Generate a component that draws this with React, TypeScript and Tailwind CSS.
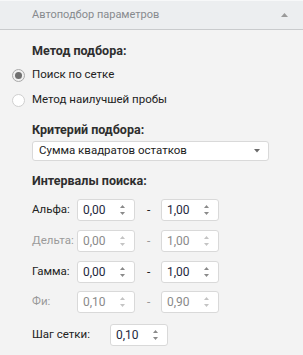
import React from "react";

const font = { fontFamily: 'Roboto, "Noto Sans", sans-serif' };

function Spin({ value, disabled }: { value: string; disabled?: boolean }) {
  return (
    <div className="flex h-[22px] w-[58px] items-center justify-between rounded-[3px] border border-[#d9d9d9] bg-white pl-[5px] pr-[8px]">
      <span className={`text-[12px] leading-none ${disabled ? "text-[#8a8a8a]" : "text-[#1e2840]"}`}>{value}</span>
      <svg width="7" height="12" viewBox="0 0 7 12">
        <path d="M3.5 1 L6 4 L1 4 Z" fill={disabled ? "#c4c4c4" : "#8a8a8a"} />
        <path d="M1 8 L6 8 L3.5 11 Z" fill={disabled ? "#c4c4c4" : "#8a8a8a"} />
      </svg>
    </div>
  );
}

function Row({ label, a, b, disabled, mt }: { label: string; a: string; b: string; disabled?: boolean; mt: string }) {
  return (
    <div className={`flex h-[22px] items-center ${mt}`}>
      <span className={`w-[45px] text-[11.5px] ${disabled ? "text-[#9a9a9a]" : "text-[#222]"}`}>{label}</span>
      <Spin value={a} disabled={disabled} />
      <span className={`ml-[12px] w-[14px] text-[12px] ${disabled ? "text-[#9a9a9a]" : "text-[#222]"}`}>-</span>
      <Spin value={b} disabled={disabled} />
    </div>
  );
}

export default function App() {
  return (
    <div className="h-[355px] w-[303px] overflow-hidden bg-[#f3f3f3]" style={font}>
      <div className="flex h-[30px] items-center justify-between border-t border-t-[#f7f8f9] border-b border-b-[#c9cbcd] bg-[#eceef0] pl-[32px] pr-[15px]">
        <span className="text-[11px] text-[#878a8e]">Автоподбор параметров</span>
        <svg width="7" height="4" viewBox="0 0 7 4">
          <path d="M3.5 0 L7 4 L0 4 Z" fill="#9a9a9a" />
        </svg>
      </div>
      <div className="pl-[32px]">
        <div className="mt-[11px] flex h-[20px] items-center text-[12.5px] font-bold text-[#2e2e2e]">Метод подбора:</div>
      </div>
      <div className="mt-[4px] flex h-[20px] items-center pl-[12px]">
        <div className="flex h-[13px] w-[13px] items-center justify-center rounded-full border border-[#a9a9a9] bg-[#f0f0f0]">
          <div className="h-[7px] w-[7px] rounded-full bg-[#6f6f6f]" />
        </div>
        <span className="ml-[7px] text-[11.5px] text-[#222]">Поиск по сетке</span>
      </div>
      <div className="mt-[5px] flex h-[20px] items-center pl-[12px]">
        <div className="h-[13px] w-[13px] rounded-full border border-[#cfcfcf] bg-white" />
        <span className="ml-[7px] text-[11.5px] text-[#222]">Метод наилучшей пробы</span>
      </div>
      <div className="pl-[32px] pr-[34px]">
        <div className="mt-[10px] flex h-[20px] items-center text-[12.5px] font-bold text-[#2e2e2e]">Критерий подбора:</div>
        <div className="mt-[1px] flex h-[20px] w-[237px] items-center justify-between rounded-[3px] border border-[#d9d9d9] bg-white pl-[6px] pr-[8px]">
          <span className="text-[11.5px] text-[#222]">Сумма квадратов остатков</span>
          <svg width="6" height="4" viewBox="0 0 6 4">
            <path d="M0 0 L6 0 L3 3.5 Z" fill="#6a6a6a" />
          </svg>
        </div>
        <div className="mt-[10px] flex h-[20px] items-center text-[12.5px] font-bold text-[#2e2e2e]">Интервалы поиска:</div>
        <Row label="Альфа:" a="0,00" b="1,00" mt="mt-[8px]" />
        <Row label="Дельта:" a="0,00" b="1,00" disabled mt="mt-[9px]" />
        <Row label="Гамма:" a="0,00" b="1,00" mt="mt-[9px]" />
        <Row label="Фи:" a="0,10" b="0,90" disabled mt="mt-[8px]" />
        <div className="mt-[11px] flex h-[22px] items-center">
          <span className="w-[78px] text-[11.5px] text-[#222]">Шаг сетки:</span>
          <Spin value="0,10" />
        </div>
      </div>
    </div>
  );
}
